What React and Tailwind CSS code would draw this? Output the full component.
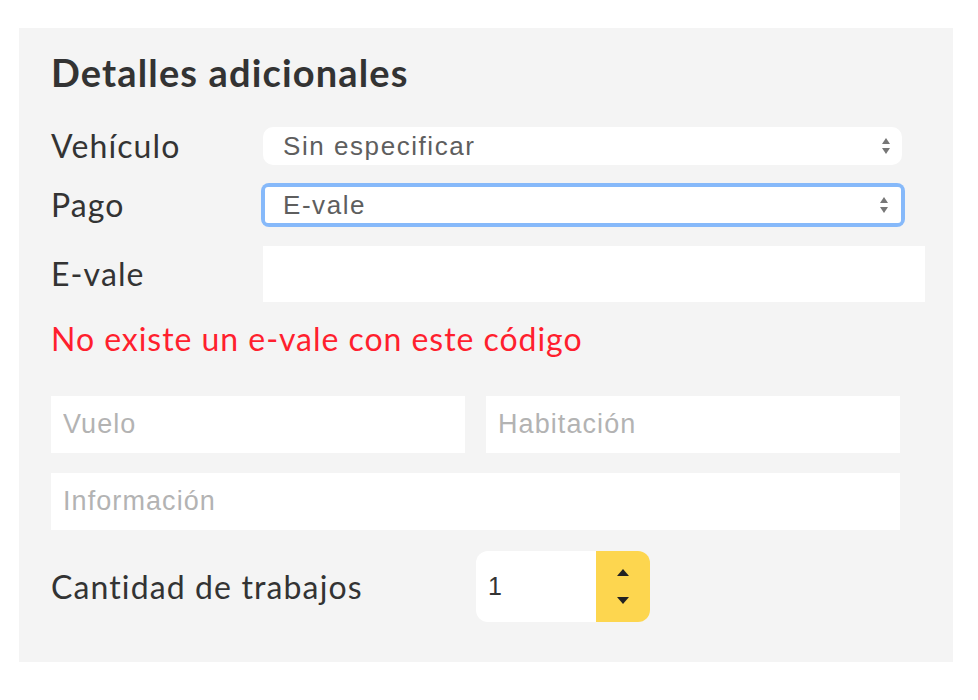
import React from 'react';

const lato = { fontFamily: 'Lato, "Open Sans", sans-serif' };

const SelectArrows = () => (
    <svg width="10" height="18" viewBox="0 0 10 18" className="shrink-0">
        <path d="M1 7 L5 1 L9 7 Z" fill="#777" />
        <path d="M1 11 L5 17 L9 11 Z" fill="#777" />
    </svg>
);

const Campo = ({ label, children }) => (
    <div className="flex items-center">
        <div className="w-[212px] shrink-0 text-[32px] tracking-[0.035em] text-[#333] leading-none">{label}</div>
        {children}
    </div>
);

const DetallesAdicionales = () => {
    return (
        <div className="bg-white w-[978px] h-[700px] pt-[28px] pl-[19px]">
            <div className="w-[934px] h-[634px] bg-[#f4f4f4] pl-[32px] pr-[53px] pt-[22px]" style={lato}>
                <h2 className="text-[38px] font-bold text-[#333] leading-[44px] tracking-[0.03em]">Detalles adicionales</h2>

                <div className="mt-[33px]">
                    <Campo label="Vehículo">
                        <div className="flex-1 h-[38px] bg-white rounded-[10px] flex items-center justify-between pl-[20px] pr-[11px] -mr-[2px]">
                            <span className="text-[26px] text-[#5e5e5e] font-['Liberation_Sans'] tracking-[0.06em]">Sin especificar</span>
                            <SelectArrows />
                        </div>
                    </Campo>
                </div>

                <div className="mt-[18px]">
                    <Campo label="Pago">
                        <div className="flex-1 h-[44px] rounded-[8px] p-[4px] bg-[#86b9fa] -ml-[2px] -mr-[5px]">
                            <div className="h-full bg-white rounded-[3px] flex items-center justify-between pl-[18px] pr-[12px]">
                                <span className="text-[26px] text-[#5e5e5e] font-['Liberation_Sans'] tracking-[0.06em]">E-vale</span>
                                <SelectArrows />
                            </div>
                        </div>
                    </Campo>
                </div>

                <div className="mt-[19px]">
                    <Campo label="E-vale">
                        <input className="w-[662px] shrink-0 h-[56px] bg-white outline-none px-3 text-[24px]" />
                    </Campo>
                </div>

                <p className="mt-[19px] text-[32px] tracking-[0.03em] leading-[36px] text-[#ff1f2e]">No existe un e-vale con este código</p>

                <div className="mt-[39px] flex gap-[21px]">
                    <input placeholder="Vuelo" className="flex-1 min-w-0 h-[57px] bg-white outline-none pl-[12px] text-[27px] tracking-[0.04em] placeholder:text-[#b3b3b3] font-['Liberation_Sans']" />
                    <input placeholder="Habitación" className="flex-1 min-w-0 h-[57px] bg-white outline-none pl-[12px] text-[27px] tracking-[0.04em] placeholder:text-[#b3b3b3] font-['Liberation_Sans']" />
                </div>

                <input placeholder="Información" className="mt-[20px] w-full h-[57px] bg-white outline-none pl-[12px] text-[27px] tracking-[0.04em] placeholder:text-[#b3b3b3] font-['Liberation_Sans']" />

                <div className="mt-[21px] flex items-center">
                    <div className="w-[425px] shrink-0 text-[32px] tracking-[0.035em] text-[#333] leading-none">Cantidad de trabajos</div>
                    <div className="flex h-[71px] w-[174px] rounded-[12px] overflow-hidden">
                        <div className="w-[120px] bg-white flex items-center pl-[12px] text-[25px] text-[#333] font-['Liberation_Sans']">1</div>
                        <div className="w-[54px] bg-[#fdd64f] flex flex-col items-center justify-between py-[17px]">
                            <svg width="14" height="8" viewBox="0 0 14 8"><path d="M1 8 L7 1 L13 8 Z" fill="#222" /></svg>
                            <svg width="14" height="8" viewBox="0 0 14 8"><path d="M1 0 L7 7 L13 0 Z" fill="#222" /></svg>
                        </div>
                    </div>
                </div>
            </div>
        </div>
    );
};

export default function App() {
    return <DetallesAdicionales />;
}
